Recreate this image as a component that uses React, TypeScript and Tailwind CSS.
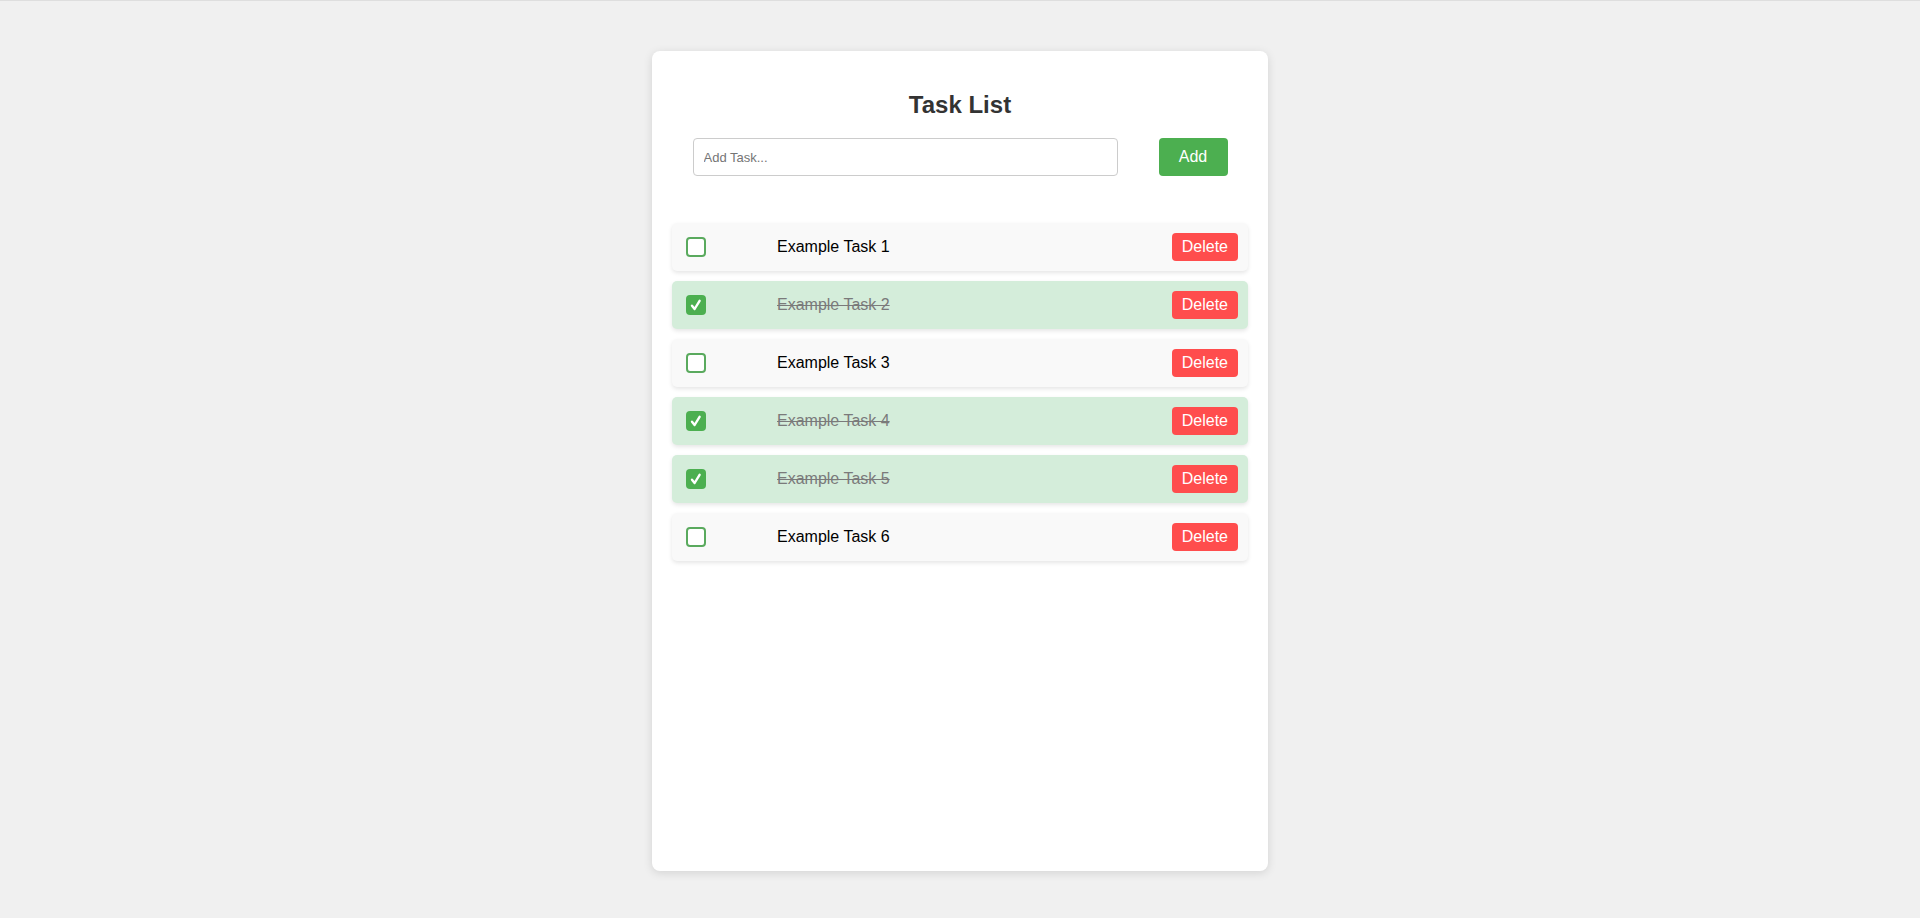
import React, { useState } from "react";

type Task = { id: number; text: string; done: boolean };

const initial: Task[] = [
  { id: 1, text: "Example Task 1", done: false },
  { id: 2, text: "Example Task 2", done: true },
  { id: 3, text: "Example Task 3", done: false },
  { id: 4, text: "Example Task 4", done: true },
  { id: 5, text: "Example Task 5", done: true },
  { id: 6, text: "Example Task 6", done: false },
];

function Check({ checked, onClick }: { checked: boolean; onClick: () => void }) {
  return (
    <button
      onClick={onClick}
      className={
        checked
          ? "ml-[4px] w-[20px] h-[20px] shrink-0 rounded-[4px] bg-[#4caf50] flex items-center justify-center"
          : "ml-[4px] w-[20px] h-[20px] shrink-0 rounded-[4px] border-2 border-[#5aaa5e] bg-white"
      }
    >
      {checked && (
        <svg width="16" height="16" viewBox="0 0 16 16">
          <path d="M4 8.8 L6.6 12 L11.6 3.8" fill="none" stroke="white" strokeWidth="2.4" strokeLinecap="round" strokeLinejoin="round" />
        </svg>
      )}
    </button>
  );
}

export default function App() {
  const [tasks, setTasks] = useState<Task[]>(initial);
  const [value, setValue] = useState("");
  const add = () => {
    if (!value.trim()) return;
    setTasks([...tasks, { id: Date.now(), text: value, done: false }]);
    setValue("");
  };
  return (
    <div
      className="min-h-[918px] bg-[#f0f0f0] border-t border-[#dedede] pt-[50px]"
      style={{ fontFamily: '"Liberation Sans", Arial, sans-serif' }}
    >
      <div className="mx-auto w-[616px] h-[820px] bg-white rounded-[8px] shadow-[0_2px_10px_rgba(0,0,0,0.12)] px-[20px] pt-[40px]">
        <h2 className="text-center text-[24px] leading-[28px] font-bold text-[#333]">Task List</h2>
        <div className="mt-[19px] flex justify-around items-center">
          <input
            value={value}
            onChange={(e) => setValue(e.target.value)}
            placeholder="Add Task..."
            className="w-[425px] h-[38px] border border-[#ccc] rounded-[4px] px-[10px] text-[13px] text-[#333] placeholder:text-[#757575] outline-none"
          />
          <button
            onClick={add}
            className="w-[69px] h-[38px] bg-[#4caf50] text-white text-[16px] rounded-[4px]"
          >
            Add
          </button>
        </div>
        <ul className="mt-[47px] flex flex-col gap-[10px]">
          {tasks.map((t) => (
            <li
              key={t.id}
              className={
                (t.done ? "bg-[#d4edda] " : "bg-[#f9f9f9] ") +
                "h-[48px] flex items-center px-[10px] rounded-[5px] shadow-[0_2px_4px_rgba(0,0,0,0.1)]"
              }
            >
              <Check
                checked={t.done}
                onClick={() => setTasks(tasks.map((x) => (x.id === t.id ? { ...x, done: !x.done } : x)))}
              />
              <span
                className={
                  "ml-[71px] flex-1 text-[16px] leading-[18px] " +
                  (t.done ? "line-through text-[#7a7a7a]" : "text-black")
                }
              >
                {t.text}
              </span>
              <button
                onClick={() => setTasks(tasks.filter((x) => x.id !== t.id))}
                className="h-[28px] px-[10px] bg-[#ff4d4d] text-white text-[16px] leading-[18px] rounded-[4px]"
              >
                Delete
              </button>
            </li>
          ))}
        </ul>
      </div>
    </div>
  );
}
